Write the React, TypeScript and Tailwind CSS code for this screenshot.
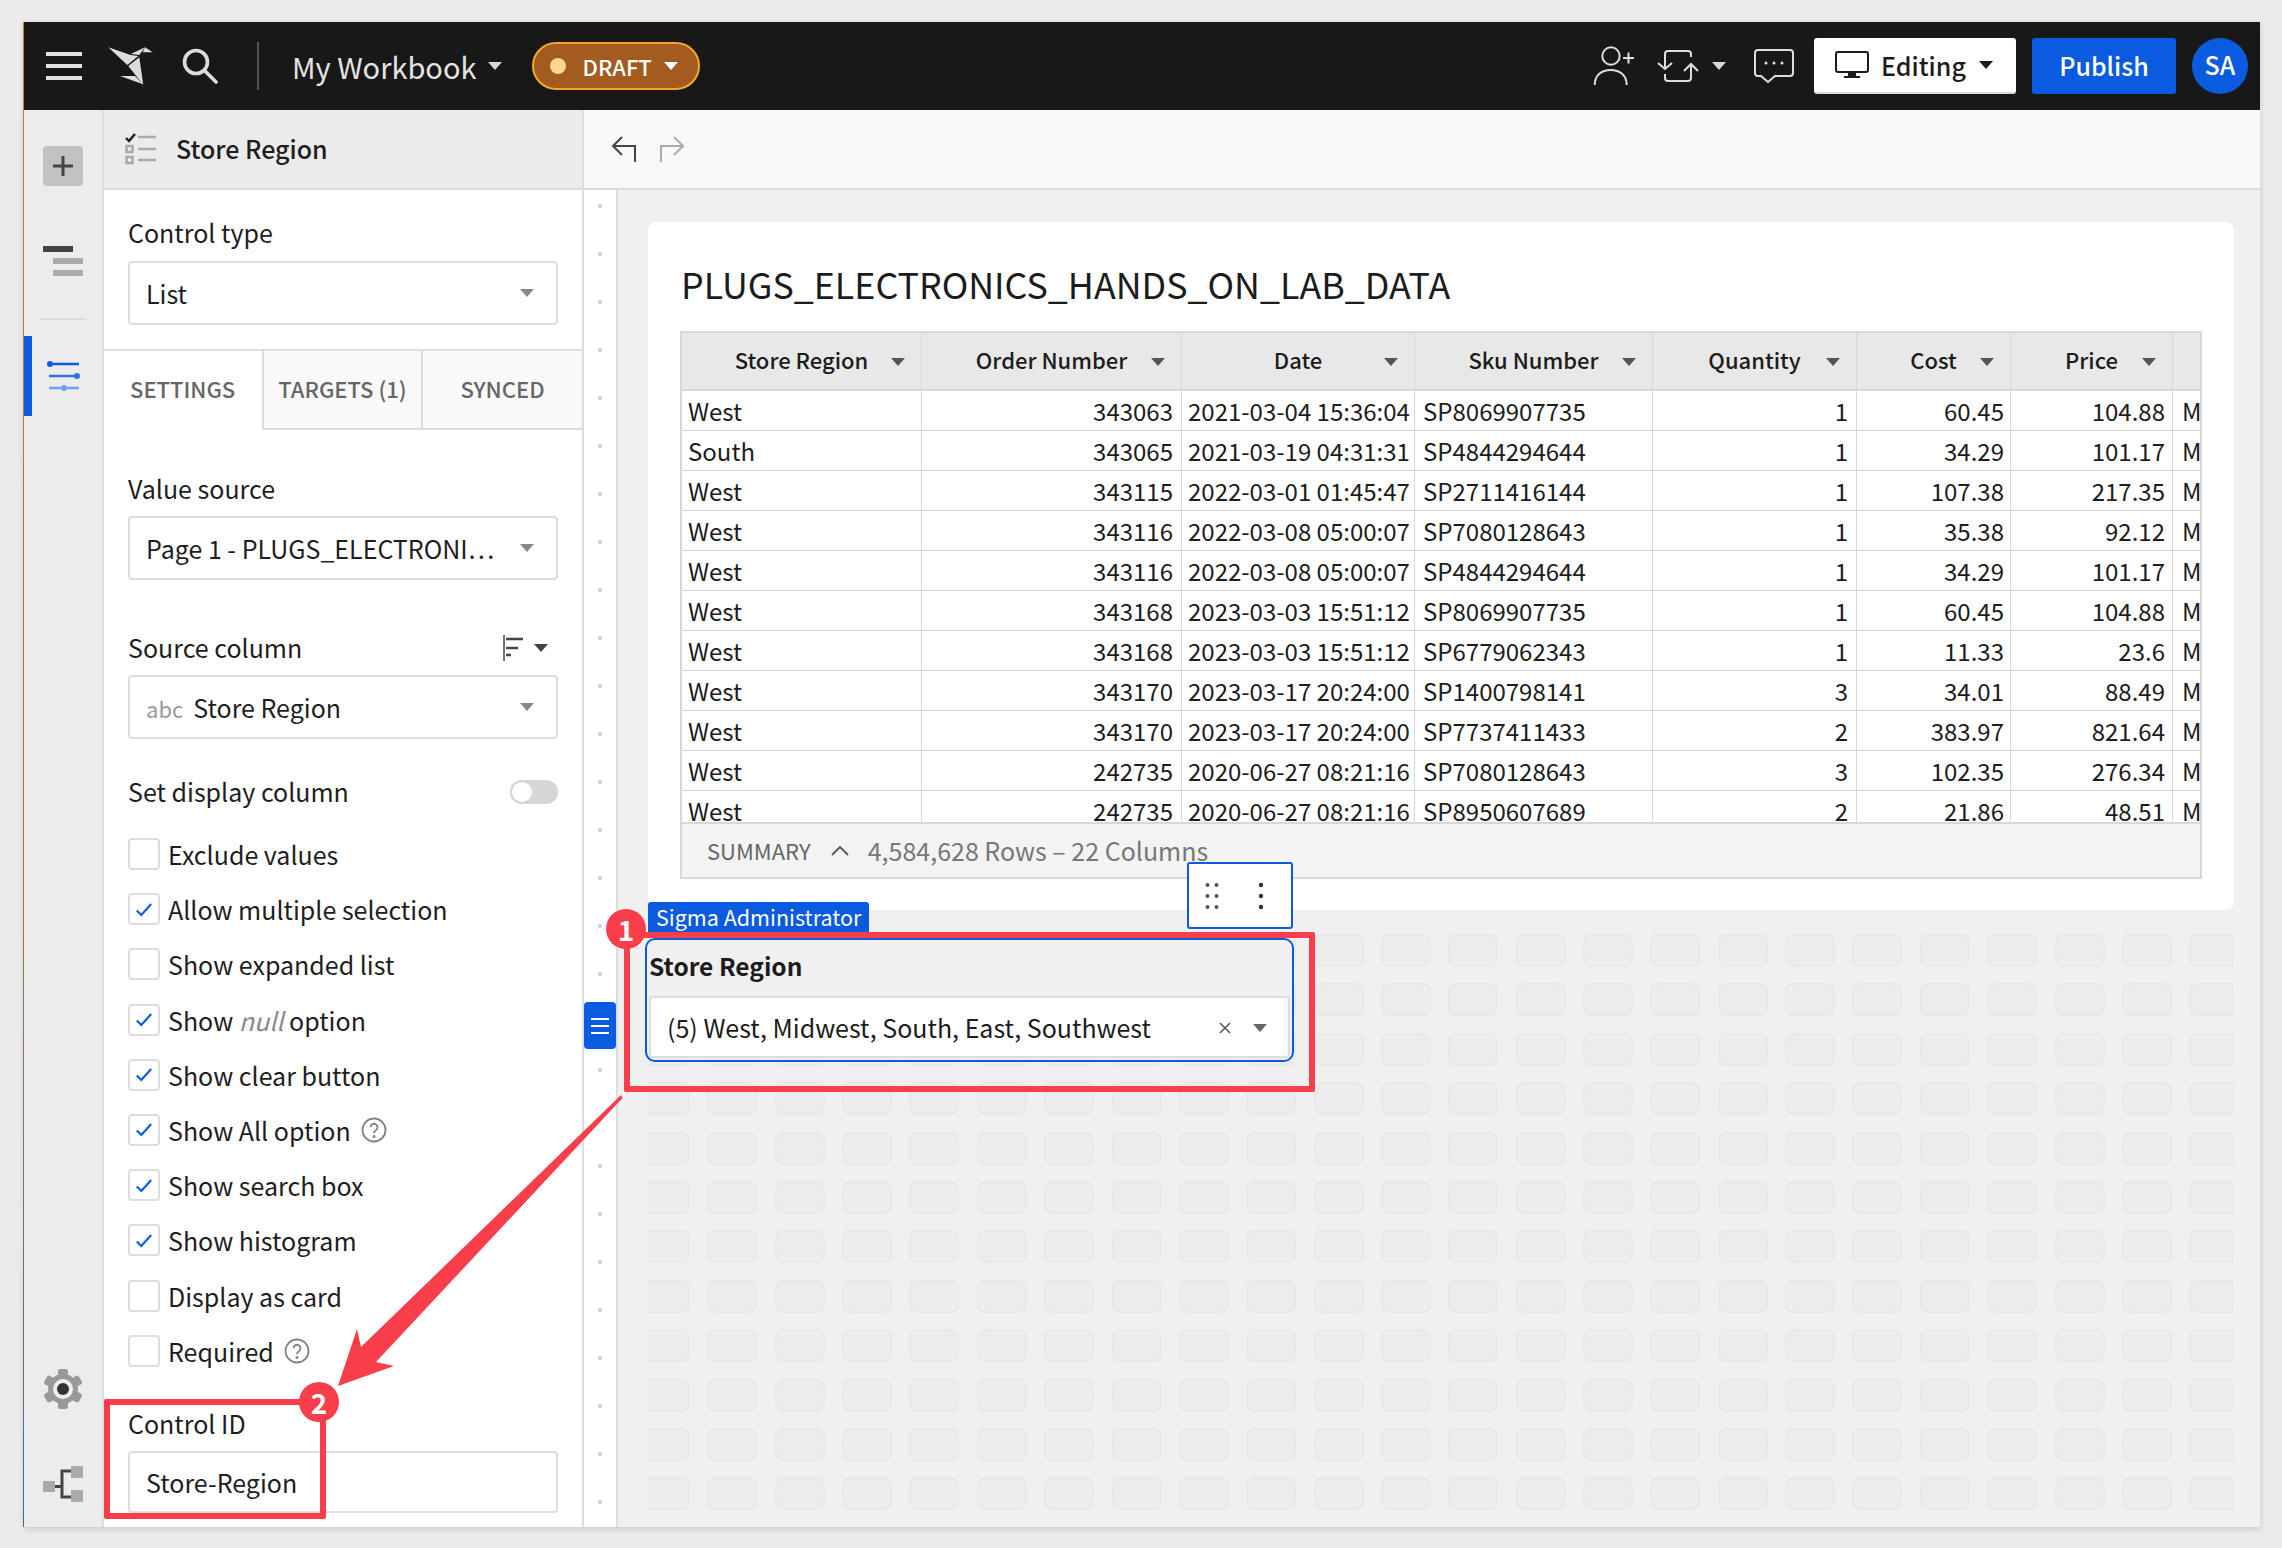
import React from 'react';

const columns = [
  { name: 'Store Region', cell: 'pl-[6px]' },
  { name: 'Order Number', cell: 'pr-2 text-right' },
  { name: 'Date', cell: 'pl-[6px]' },
  { name: 'Sku Number', cell: 'pl-2' },
  { name: 'Quantity', cell: 'pr-2 text-right' },
  { name: 'Cost', cell: 'pr-[6px] text-right' },
  { name: 'Price', cell: 'pr-[7px] text-right' },
  { name: '', cell: 'pl-[9px]' },
];

const rows = [
  ['West', '343063', '2021-03-04 15:36:04', 'SP8069907735', '1', '60.45', '104.88', 'M'],
  ['South', '343065', '2021-03-19 04:31:31', 'SP4844294644', '1', '34.29', '101.17', 'M'],
  ['West', '343115', '2022-03-01 01:45:47', 'SP2711416144', '1', '107.38', '217.35', 'M'],
  ['West', '343116', '2022-03-08 05:00:07', 'SP7080128643', '1', '35.38', '92.12', 'M'],
  ['West', '343116', '2022-03-08 05:00:07', 'SP4844294644', '1', '34.29', '101.17', 'M'],
  ['West', '343168', '2023-03-03 15:51:12', 'SP8069907735', '1', '60.45', '104.88', 'M'],
  ['West', '343168', '2023-03-03 15:51:12', 'SP6779062343', '1', '11.33', '23.6', 'M'],
  ['West', '343170', '2023-03-17 20:24:00', 'SP1400798141', '3', '34.01', '88.49', 'M'],
  ['West', '343170', '2023-03-17 20:24:00', 'SP7737411433', '2', '383.97', '821.64', 'M'],
  ['West', '242735', '2020-06-27 08:21:16', 'SP7080128643', '3', '102.35', '276.34', 'M'],
  ['West', '242735', '2020-06-27 08:21:16', 'SP8950607689', '2', '21.86', '48.51', 'M'],
];

const options: { label: React.ReactNode; checked: boolean; help?: boolean }[] = [
  { label: 'Exclude values', checked: false },
  { label: 'Allow multiple selection', checked: true },
  { label: 'Show expanded list', checked: false },
  { label: <>Show <em className="text-[#8a8a8a]">null</em> option</>, checked: true },
  { label: 'Show clear button', checked: true },
  { label: 'Show All option', checked: true, help: true },
  { label: 'Show search box', checked: true },
  { label: 'Show histogram', checked: true },
  { label: 'Display as card', checked: false },
  { label: 'Required', checked: false, help: true },
];

const Caret = ({ className }: { className: string }) => (
  <svg viewBox="0 0 14 8" className={`w-[14px] h-2 shrink-0 ${className}`}>
    <path d="M0 0h14L7 8z" fill="currentColor" />
  </svg>
);

const Select = ({ children }: { children: React.ReactNode }) => (
  <div className="mx-6 h-16 flex items-center justify-between pl-4 pr-[22px] border-2 border-[#dddddd] rounded-[4px] bg-white">
    <div className="flex items-center pt-[2px]">{children}</div>
    <Caret className="text-[#888888]" />
  </div>
);

const HelpIcon = () => (
  <svg viewBox="0 0 26 26" className="w-[26px] h-[26px] ml-[10px]" fill="none" stroke="#808080" strokeWidth="1.800">
    <circle cx="13" cy="13" r="11.500" />
    <path d="M9.500 10.200a3.500 3.500 0 1 1 5.400 3c-1.300.8-1.900 1.500-1.900 3" />
    <circle cx="13" cy="19.600" r="0.600" fill="#808080" />
  </svg>
);

const Logo = () => (
  <svg viewBox="0 0 45 38" className="w-[45px] h-[38px] ml-[26px]" fill="#dcdcdc">
    <path d="M0.300 0.300L22.700 8l7.600 1L19.300 18z" />
    <path d="M20.300 19l11-8.700L35.300 38z" />
    <path d="M12 29h15l8 8.300z" />
    <path d="M22.700 7L37 0.300 31.300 8z" />
    <path d="M37 0.300l7.700 5H34.700z" />
  </svg>
);

const TopBar = () => (
  <div className="h-[88px] shrink-0 bg-[#181818] flex items-center text-white">
    <svg viewBox="0 0 36 28" className="w-9 h-7 ml-[22px]" fill="#e0e0e0">
      <rect width="36" height="4" />
      <rect y="12" width="36" height="4" />
      <rect y="24" width="36" height="4" />
    </svg>
    <Logo />
    <svg viewBox="0 0 36 36" className="w-9 h-9 ml-[29px]" fill="none" stroke="#dcdcdc" strokeWidth="3.600" strokeLinecap="round">
      <circle cx="14" cy="14" r="11.500" />
      <path d="M23 23l11 11" />
    </svg>
    <div className="w-[2px] h-12 bg-[#555555] ml-[39px]" />
    <span className="ml-[33px] text-[29px] leading-9 text-[#e4e4e4]">My Workbook</span>
    <Caret className="ml-[11px] text-[#d8d8d8]" />
    <div className="ml-[30px] w-[168px] h-12 rounded-full bg-[#a35b1f] border-2 border-[#f5a62f] flex items-center pl-4">
      <span className="w-4 h-4 rounded-full bg-[#ffd58f]" />
      <span className="ml-[17px] text-[22px] font-medium leading-7">DRAFT</span>
      <Caret className="ml-3 text-white" />
    </div>

    <svg viewBox="0 0 42 40" className="w-[42px] h-10 ml-auto" fill="none" stroke="#dedede" strokeWidth="2">
      <circle cx="18" cy="10" r="8.700" />
      <path d="M1.700 39c0-10 7-15 16-15s16 5 16 15" />
      <path d="M30 12h11M35.500 6.500v11" />
    </svg>
    <svg viewBox="0 0 44 36" className="w-11 h-9 ml-[21px]" fill="none" stroke="#dedede" strokeWidth="2">
      <path d="M35 9V6a3 3 0 0 0-3-3H12a3 3 0 0 0-3 3v15M2 15l7 6 7-6" />
      <path d="M9 26v4a3 3 0 0 0 3 3h20a3 3 0 0 0 3-3V16M28 23l7-7 7 7" />
    </svg>
    <Caret className="ml-3 text-[#d8d8d8]" />
    <svg viewBox="0 0 44 38" className="w-11 h-[38px] ml-[26px]" fill="none" stroke="#dedede" strokeWidth="2">
      <path d="M6 3h32a3 3 0 0 1 3 3v20a3 3 0 0 1-3 3H23l-7 6-7-6H6a3 3 0 0 1-3-3V6a3 3 0 0 1 3-3z" />
      <circle cx="14" cy="16" r="1.500" fill="#dedede" stroke="none" />
      <circle cx="22" cy="16" r="1.500" fill="#dedede" stroke="none" />
      <circle cx="30" cy="16" r="1.500" fill="#dedede" stroke="none" />
    </svg>
    <div className="ml-[18px] w-[202px] h-14 bg-white border-b-2 border-[#d8d8d8] rounded-[3px] flex items-center pl-[21px] text-[#1c1c1c]">
      <svg viewBox="0 0 34 28" className="w-[34px] h-7">
        <rect x="1" y="1" width="32" height="20" rx="2" fill="none" stroke="#1c1c1c" strokeWidth="2" />
        <path d="M13 22h8v3h4v2H9v-2h4z" fill="#1c1c1c" />
      </svg>
      <span className="ml-3 text-[25px] font-medium leading-8">Editing</span>
      <Caret className="ml-[13px] text-[#1c1c1c]" />
    </div>
    <div className="ml-4 w-[144px] h-14 bg-[#0a5be0] rounded-[3px] flex items-center justify-center text-[25px] font-medium">
      Publish
    </div>
    <div className="ml-4 mr-3 w-14 h-14 rounded-full bg-[#0a5be0] flex items-center justify-center pb-[2px] text-[25px] font-medium">
      SA
    </div>
  </div>
);

const Rail = () => (
  <div className="w-[80px] shrink-0 bg-[#ececec] border-r-2 border-[#dddddd] flex flex-col relative">
    <div className="ml-[19px] mt-9 w-10 h-10 rounded-[4px] bg-[#c2c2c2] flex items-center justify-center">
      <svg viewBox="0 0 20 20" className="w-5 h-5" fill="#444444">
        <path d="M8.500 0h3v8.500H20v3h-8.500V20h-3v-8.500H0v-3h8.500z" />
      </svg>
    </div>
    <svg viewBox="0 0 40 30" className="w-10 h-[30px] ml-[19px] mt-[60px]">
      <rect width="30" height="6" fill="#444444" />
      <rect x="10" y="12" width="30" height="6" fill="#aaaaaa" />
      <rect x="10" y="24" width="30" height="6" fill="#aaaaaa" />
    </svg>
    <div className="h-[2px] w-[46px] ml-4 mt-[42px] bg-[#dcdcdc]" />
    <div className="mt-4 h-20 flex items-center relative">
      <div className="w-2 h-20 bg-[#0a5be0]" />
      <svg viewBox="0 0 34 32" className="w-[34px] h-8 ml-[14px]">
        <path d="M2 4h31" stroke="#0a5be0" strokeWidth="2.500" />
        <circle cx="4" cy="4" r="3" fill="#0a5be0" />
        <path d="M3 16h30" stroke="#2f73e6" strokeWidth="2.500" />
        <circle cx="31" cy="16" r="3" fill="#2f73e6" />
        <path d="M3 28h30" stroke="#6f9ff0" strokeWidth="2.500" />
        <circle cx="18" cy="28" r="3" fill="#6f9ff0" />
      </svg>
    </div>
    <div className="mt-auto mb-[118px] ml-5 w-[38px] h-10">
      <svg viewBox="0 0 38 40" className="w-[38px] h-10">
        <g fill="#999999">
          <circle cx="19" cy="20" r="15" />
          <rect x="14" y="0" width="10" height="40" rx="2.500" />
          <rect x="14" y="0" width="10" height="40" rx="2.500" transform="rotate(60 19 20)" />
          <rect x="14" y="0" width="10" height="40" rx="2.500" transform="rotate(120 19 20)" />
        </g>
        <circle cx="19" cy="20" r="10" fill="#eeeeee" />
        <circle cx="19" cy="20" r="6" fill="#333333" />
      </svg>
    </div>
    <svg viewBox="0 0 40 36" className="absolute left-[19px] bottom-[25px] w-10 h-9" fill="none">
      <path d="M11 20.500h8M28 5h-9v26h9" stroke="#444444" strokeWidth="3" />
      <rect x="0" y="15" width="12" height="11" fill="#aaaaaa" />
      <rect x="28" y="0" width="12" height="12" fill="#aaaaaa" />
      <rect x="28" y="24" width="12" height="12" fill="#aaaaaa" />
    </svg>
  </div>
);

const Panel = () => (
  <div className="w-[480px] shrink-0 bg-white border-r-2 border-[#dddddd] flex flex-col text-[#1e1e1e] text-[25px]">
    <div className="h-[80px] shrink-0 bg-[#ebebeb] border-b-2 border-[#dddddd] flex items-center pl-[21px]">
      <svg viewBox="0 0 32 32" className="w-8 h-8">
        <path d="M1 5l3 3 6-7" fill="none" stroke="#1c1c1c" strokeWidth="2.400" />
        <rect x="1.500" y="13" width="6" height="6" fill="none" stroke="#a8a8a8" strokeWidth="2.500" />
        <rect x="1.500" y="24" width="6" height="6" fill="none" stroke="#a8a8a8" strokeWidth="2.500" />
        <path d="M13 4h18M13 16h18M13 27h18" stroke="#aaaaaa" strokeWidth="2.500" />
      </svg>
      <span className="ml-[19px] text-[25px] font-medium">Store Region</span>
    </div>

    <div className="mx-6 mt-7 h-8 leading-[29px]">Control type</div>
    <div className="mt-[11px]"><Select>List</Select></div>

    <div className="mt-6 h-[81px] shrink-0 border-t-2 border-[#dddddd] flex text-[22px] font-medium text-[#666666] leading-7">
      <div className="w-[158px] flex items-center pl-[26px] pb-[6px]">SETTINGS</div>
      <div className="w-[161px] bg-[#f9f9f9] border-l-2 border-r-2 border-b-2 border-[#dddddd] flex items-center justify-center pb-1">TARGETS (1)</div>
      <div className="w-[159px] bg-[#f9f9f9] border-b-2 border-[#dddddd] flex items-center justify-center pb-1">SYNCED</div>
    </div>

    <div className="mx-6 mt-[44px] h-8 leading-[29px]">Value source</div>
    <div className="mt-[10px]"><Select>Page 1 - PLUGS_ELECTRONI…</Select></div>

    <div className="mx-6 mt-[52px] h-8 flex items-center justify-between">
      <span className="leading-[29px] pb-[1px]">Source column</span>
      <span className="flex items-center pr-[10px]">
        <svg viewBox="0 0 20 26" className="w-5 h-[26px]">
          <path d="M1 0v26" stroke="#444444" strokeWidth="1.500" />
          <path d="M3 4h17M3 13h12M3 20h5" stroke="#444444" strokeWidth="2.600" />
        </svg>
        <Caret className="ml-[11px] text-[#444444]" />
      </span>
    </div>
    <div className="mt-[11px]">
      <Select>
        <span className="text-[22px] text-[#999999] mr-[10px]">abc</span>Store Region
      </Select>
    </div>

    <div className="mx-6 mt-[37px] h-8 flex items-center justify-between">
      <span className="leading-[29px] pb-[1px]">Set display column</span>
      <span className="w-12 h-6 rounded-full bg-[#d6d6d6]">
        <span className="block w-6 h-6 rounded-full bg-white border-2 border-[#d6d6d6]" />
      </span>
    </div>

    <div className="mx-6 mt-[30px] flex flex-col gap-y-[23.200px]">
      {options.map((option, i) => (
        <div key={i} className="h-8 flex items-center">
          <span className="w-8 h-8 border-2 border-[#dddddd] rounded-[4px] flex items-center justify-center">
            {option.checked && (
              <svg viewBox="0 0 20 16" className="w-[18px] h-[15px]" fill="none" stroke="#0a5be0" strokeWidth="2.400">
                <path d="M2 9l5 5L18 2" />
              </svg>
            )}
          </span>
          <span className="ml-2 leading-8">{option.label}</span>
          {option.help && <HelpIcon />}
        </div>
      ))}
    </div>

    <div className="mx-6 mt-10 h-8 leading-8">Control ID</div>
    <div className="mx-6 mt-3 h-[62px] flex items-center pl-4 pt-[2px] border-2 border-[#dddddd] rounded-[4px]">Store-Region</div>
  </div>
);

const DataTable = () => (
  <div className="ml-8 w-[1522px] border-2 border-[#d8d8d8] text-[24px] text-[#1c1c1c]">
    <div className="grid grid-cols-[240px_260px_233px_238px_204px_154px_162px_27px] h-[58px] bg-[#e8e8e8] border-b-2 border-[#d8d8d8]">
      {columns.map((col, i) => (
        <div key={i} className="relative flex items-center justify-center pb-1 border-r border-[#d8d8d8] last:border-r-0 text-[22px] font-medium">
          {col.name}
          {col.name && <Caret className="absolute right-4 top-[25px] text-[#555555]" />}
        </div>
      ))}
    </div>
    <div className="h-[433px] overflow-hidden border-b-2 border-[#d8d8d8]">
      {rows.map((row, r) => (
        <div key={r} className="grid grid-cols-[240px_260px_233px_238px_204px_154px_162px_27px] h-10 border-b border-[#d8d8d8]">
          {row.map((value, c) => (
            <div key={c} className={`pt-[1px] leading-[38px] overflow-hidden whitespace-nowrap border-r border-[#d8d8d8] last:border-r-0 ${columns[c].cell}`}>
              {value}
            </div>
          ))}
        </div>
      ))}
    </div>
    <div className="h-[53px] bg-[#f3f3f3] flex items-center pl-[25px] text-[#777777] text-[25px]">
      <span className="text-[22px] text-[#666666]">SUMMARY</span>
      <svg viewBox="0 0 18 10" className="w-[18px] h-[10px] ml-5" fill="none" stroke="#555555" strokeWidth="1.800">
        <path d="M1 9l8-8 8 8" />
      </svg>
      <span className="ml-[19px]">4,584,628 Rows – 22 Columns</span>
    </div>
  </div>
);

const Canvas = () => (
  <div className="flex-1 relative bg-[#f0f0f0] overflow-hidden pl-[30px] pt-8">
    <div className="w-[1586px] h-[688px] bg-white rounded-lg pt-[41px]">
      <div className="pl-[33px] h-11 leading-[40px] text-[35.800px] text-[#1c1c1c]">PLUGS_ELECTRONICS_HANDS_ON_LAB_DATA</div>
      <div className="mt-6"><DataTable /></div>
    </div>

    <div className="mt-6 w-[1586px] overflow-hidden">
      <div className="-ml-2 grid grid-cols-[repeat(24,50px)] gap-x-[17.370px] gap-y-[16.400px]">
        {Array.from({ length: 24 * 12 }).map((_, i) => (
          <div key={i} className="h-[33px] rounded-lg bg-[#ececec] border-2 border-[#e8e8e8]" />
        ))}
      </div>
    </div>

    <div className="absolute left-[30px] top-[712px] w-[221px] h-[30px] bg-[#0a5be0] rounded-t-[3px] text-white text-[21.500px] leading-[29px] pl-2 whitespace-nowrap">
      Sigma Administrator
    </div>
    <div className="absolute left-[569px] top-[672px] w-[106px] h-[67px] bg-white border-2 border-[#0a5be0] rounded-[3px] flex items-center">
      <svg viewBox="0 0 14 28" className="w-[14px] h-7 ml-[16px]" fill="#555555">
        {[3, 14, 25].map(y => (
          <g key={y}>
            <circle cx="2.500" cy={y} r="2" />
            <circle cx="11.500" cy={y} r="2" />
          </g>
        ))}
      </svg>
      <svg viewBox="0 0 6 28" className="w-[6px] h-7 ml-[39px]" fill="#333333">
        <circle cx="3" cy="3" r="2.200" />
        <circle cx="3" cy="14" r="2.200" />
        <circle cx="3" cy="25" r="2.200" />
      </svg>
    </div>
    <div className="absolute left-[27px] top-[748px] w-[649px] h-[124px] bg-[#f0f0f0] border-2 border-[#0a5be0] rounded-[10px] px-[2px]">
      <div className="h-[56px] flex items-center pb-1 text-[24.500px] font-bold text-[#1c1c1c]">Store Region</div>
      <div className="h-[62px] bg-white border-2 border-[#dddddd] rounded-[4px] flex items-center pl-4 pt-[2px] text-[25px] text-[#1c1c1c]">
        (5) West, Midwest, South, East, Southwest
        <svg viewBox="0 0 12 12" className="w-3 h-3 ml-auto" fill="none" stroke="#555555" strokeWidth="1.500">
          <path d="M1 1l10 10M11 1L1 11" />
        </svg>
        <Caret className="ml-[22px] mr-[21px] text-[#666666]" />
      </div>
    </div>
  </div>
);

const Annotations = () => (
  <>
    <svg viewBox="0 0 2282 1548" className="absolute -left-6 -top-[22px] w-[2282px] h-[1548px] pointer-events-none">
      <path d="M621 1095L622.500 1098L376 1362L394 1366L338 1386L357 1329L361 1347z" fill="#f93e4b" />
    </svg>
    <div className="absolute left-[600px] top-[910px] w-[691px] h-[160px] border-[6px] border-[#f93e4b] rounded-[2px]" />
    <div className="absolute left-[80px] top-[1377px] w-[222px] h-[120px] border-[6px] border-[#f93e4b] rounded-[2px]" />
    <div className="absolute left-[582px] top-[887px] w-10 h-10 rounded-full bg-[#f93e4b] flex items-center justify-center text-white text-[28px] font-bold">1</div>
    <div className="absolute left-[275px] top-[1360px] w-10 h-10 rounded-full bg-[#f93e4b] flex items-center justify-center text-white text-[28px] font-bold">2</div>
  </>
);

const App: React.FC = () => {
  return (
    <div className="w-[2282px] h-[1548px] bg-[#ebebeb] pl-6 pt-[22px] overflow-hidden font-['Noto_Sans_CJK_SC','Noto_Sans',sans-serif]">
      <div className="relative w-[2236px] h-[1505px] flex flex-col shadow-[0_2px_6px_rgba(0,0,0,0.15)]">
        <div className="absolute -left-[1px] top-0 bottom-0 w-[1px] bg-gradient-to-b from-[#b8892f] via-[#b8701f] to-[#2f6f9f]" />
        <TopBar />
        <div className="flex-1 flex min-h-0">
          <Rail />
          <Panel />
          <div className="flex-1 flex flex-col min-w-0">
            <div className="h-[80px] shrink-0 bg-[#f8f8f8] border-b-2 border-[#dddddd] flex items-center pl-[27px]">
              <svg viewBox="0 0 26 28" className="w-[26px] h-7" fill="none" stroke="#444444" strokeWidth="2">
                <path d="M11 2L2 11l9 9M2 11h22v16" />
              </svg>
              <svg viewBox="0 0 26 28" className="w-[26px] h-7 ml-[22px]" fill="none" stroke="#aaaaaa" strokeWidth="2">
                <path d="M15 2l9 9-9 9M24 11H2v16" />
              </svg>
            </div>
            <div className="flex-1 flex min-h-0">
              <div className="relative w-[34px] shrink-0 bg-white border-r-2 border-[#dddddd] pt-[14px] flex flex-col items-center gap-y-[44px] overflow-hidden">
                {Array.from({ length: 28 }).map((_, i) => (
                  <span key={i} className="w-1 h-1 shrink-0 rounded-full bg-[#cccccc]" />
                ))}
                <div className="absolute left-0 top-[812px] w-8 h-[47px] bg-[#0a5be0] rounded-[4px] flex items-center justify-center">
                  <svg viewBox="0 0 18 16" className="w-[18px] h-4" fill="#ffffff">
                    <rect width="18" height="2" />
                    <rect y="7" width="18" height="2" />
                    <rect y="14" width="18" height="2" />
                  </svg>
                </div>
              </div>
              <Canvas />
            </div>
          </div>
        </div>
        <Annotations />
      </div>
    </div>
  );
};

export default App;
